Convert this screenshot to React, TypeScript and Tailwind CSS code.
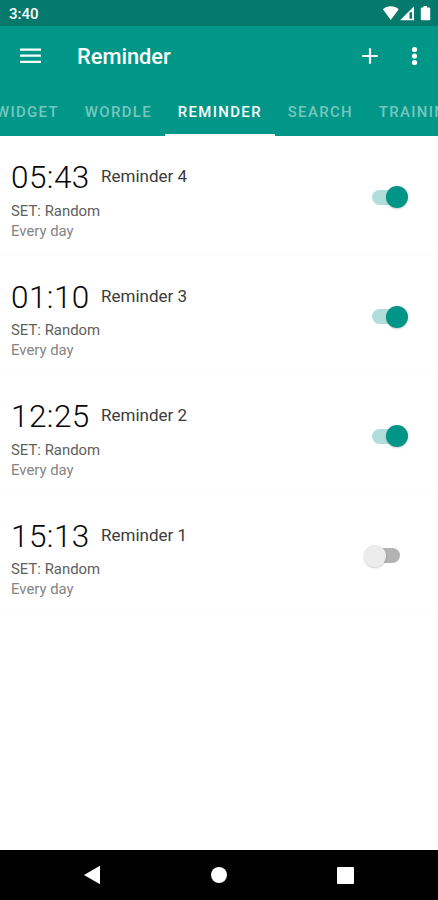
import clsx from 'clsx'

type Reminder = {
    time: string
    name: string
    enabled: boolean
}

const reminders: Reminder[] = [
    { time: '05:43', name: 'Reminder 4', enabled: true },
    { time: '01:10', name: 'Reminder 3', enabled: true },
    { time: '12:25', name: 'Reminder 2', enabled: true },
    { time: '15:13', name: 'Reminder 1', enabled: false },
]

const tabs = ['WIDGET', 'WORDLE', 'REMINDER', 'SEARCH', 'TRAINING']

function StatusBar() {
    return (
        <div className="flex h-[26px] items-center justify-between bg-[#04796c] pr-[7px] pl-[9px] text-white">
            <span className="mt-[2px] text-[15px] leading-none font-medium">
                3:40
            </span>
            <svg width="49" height="16" viewBox="0 0 49 16" fill="currentColor">
                <path d="M0.9 4.2C2.9 2.4 5.7 1.3 8.8 1.3s5.9 1.1 7.9 2.9L8.8 15z" />
                <path d="M18 15.2 32 1.3v13.9zM27.5 7.2v6.5h2.6v-6.5z" fillRule="evenodd" />
                <path d="M41.5 1h3.6v1.6h2.1q1 0 1 1v10.6q0 1-1 1h-7.4q-1 0-1-1V3.6q0-1 1-1h1.7z" />
            </svg>
        </div>
    )
}

function AppBar() {
    return (
        <header className="flex h-[61px] items-center text-white">
            <button className="-mt-[2px] ml-5">
                <svg width="21" height="16" viewBox="0 0 21 16" fill="currentColor">
                    <path d="M0 0.5h21v2.2H0zM0 6.6h21v2.2H0zM0 12.7h21v2.2H0z" />
                </svg>
            </button>
            <h1 className="ml-9 flex-1 text-[21.8px] leading-none font-medium">
                Reminder
            </h1>
            <button className="-mt-[2px]">
                <svg width="16" height="16" viewBox="0 0 16 16" fill="currentColor">
                    <path d="M6.9 0.2h2.2v6.7h6.7v2.2H9.1v6.7H6.9V9.1H0.2V6.9h6.7z" />
                </svg>
            </button>
            <button className="-mt-[2px] mr-5 ml-[33px]">
                <svg width="7" height="20" viewBox="0 0 7 20" fill="currentColor">
                    <circle cx="3.5" cy="3.5" r="2.6" />
                    <circle cx="3.5" cy="10" r="2.6" />
                    <circle cx="3.5" cy="16.5" r="2.6" />
                </svg>
            </button>
        </header>
    )
}

function TabBar() {
    return (
        <nav className="flex h-[49px] overflow-hidden text-[14.9px] font-medium tracking-[1.38px] whitespace-nowrap">
            {tabs.map((tab) => (
                <div
                    key={tab}
                    className={clsx(
                        'flex shrink-0 items-center border-b-[2px] px-[12.9px] pt-[4px] first:-ml-[17px]',
                        tab === 'REMINDER'
                            ? 'border-[#f3f8f7] text-white'
                            : 'border-transparent text-[#79c6be]'
                    )}
                >
                    {tab}
                </div>
            ))}
        </nav>
    )
}

function Toggle({ on }: { on: boolean }) {
    return (
        <div
            className={clsx(
                'mr-[30px] flex w-[44px] items-center',
                !on && 'flex-row-reverse'
            )}
        >
            <div
                className={clsx(
                    'h-[15px] w-[24px]',
                    on
                        ? 'ml-[8px] rounded-l-full bg-[#b0deda]'
                        : 'mr-[8px] rounded-r-full bg-[#b3b3b3]'
                )}
            />
            <div
                className={clsx(
                    'z-10 size-[22px] shrink-0 rounded-full shadow-[0_1px_2px_rgba(0,0,0,0.2)]',
                    on ? '-ml-[10px] bg-[#019587]' : '-mr-[10px] bg-[#ececec]'
                )}
            />
        </div>
    )
}

function ReminderRow({ time, name, enabled }: Reminder) {
    return (
        <li className="flex h-[119.5px] items-center justify-between border-b border-[#fcfcfc] pt-[4px]">
            <div className="pt-[2px] pl-[11px]">
                <div className="flex h-[42px] items-center">
                    <span className="w-[90px] pt-[2px] text-[31.5px] leading-none font-light tracking-[0.45px] text-[#080808]">
                        {time}
                    </span>
                    <span className="text-[17px] leading-none text-[#3c3c3c]">
                        {name}
                    </span>
                </div>
                <p className="mt-[3px] text-[14.9px] leading-[20px] text-[#606060]">
                    SET: Random
                </p>
                <p className="text-[14.9px] leading-[20px] text-[#858585]">
                    Every day
                </p>
            </div>
            <Toggle on={enabled} />
        </li>
    )
}

function NavigationBar() {
    return (
        <footer className="flex h-[50px] items-center justify-center gap-[110px] bg-black text-white">
            <svg width="17" height="20" viewBox="0 0 17 20" fill="currentColor">
                <path d="M0 10 16 0.8v18.4z" />
            </svg>
            <div className="size-4 rounded-full bg-white" />
            <div className="size-[17px] rounded-[1px] bg-white" />
        </footer>
    )
}

export default function App() {
    return (
        <div className="flex h-[900px] w-[438px] flex-col overflow-hidden bg-white font-['Roboto',sans-serif]">
            <StatusBar />
            <div className="bg-[#019788]">
                <AppBar />
                <TabBar />
            </div>
            <ul className="flex-1">
                {reminders.map((reminder) => (
                    <ReminderRow key={reminder.name} {...reminder} />
                ))}
            </ul>
            <NavigationBar />
        </div>
    )
}
